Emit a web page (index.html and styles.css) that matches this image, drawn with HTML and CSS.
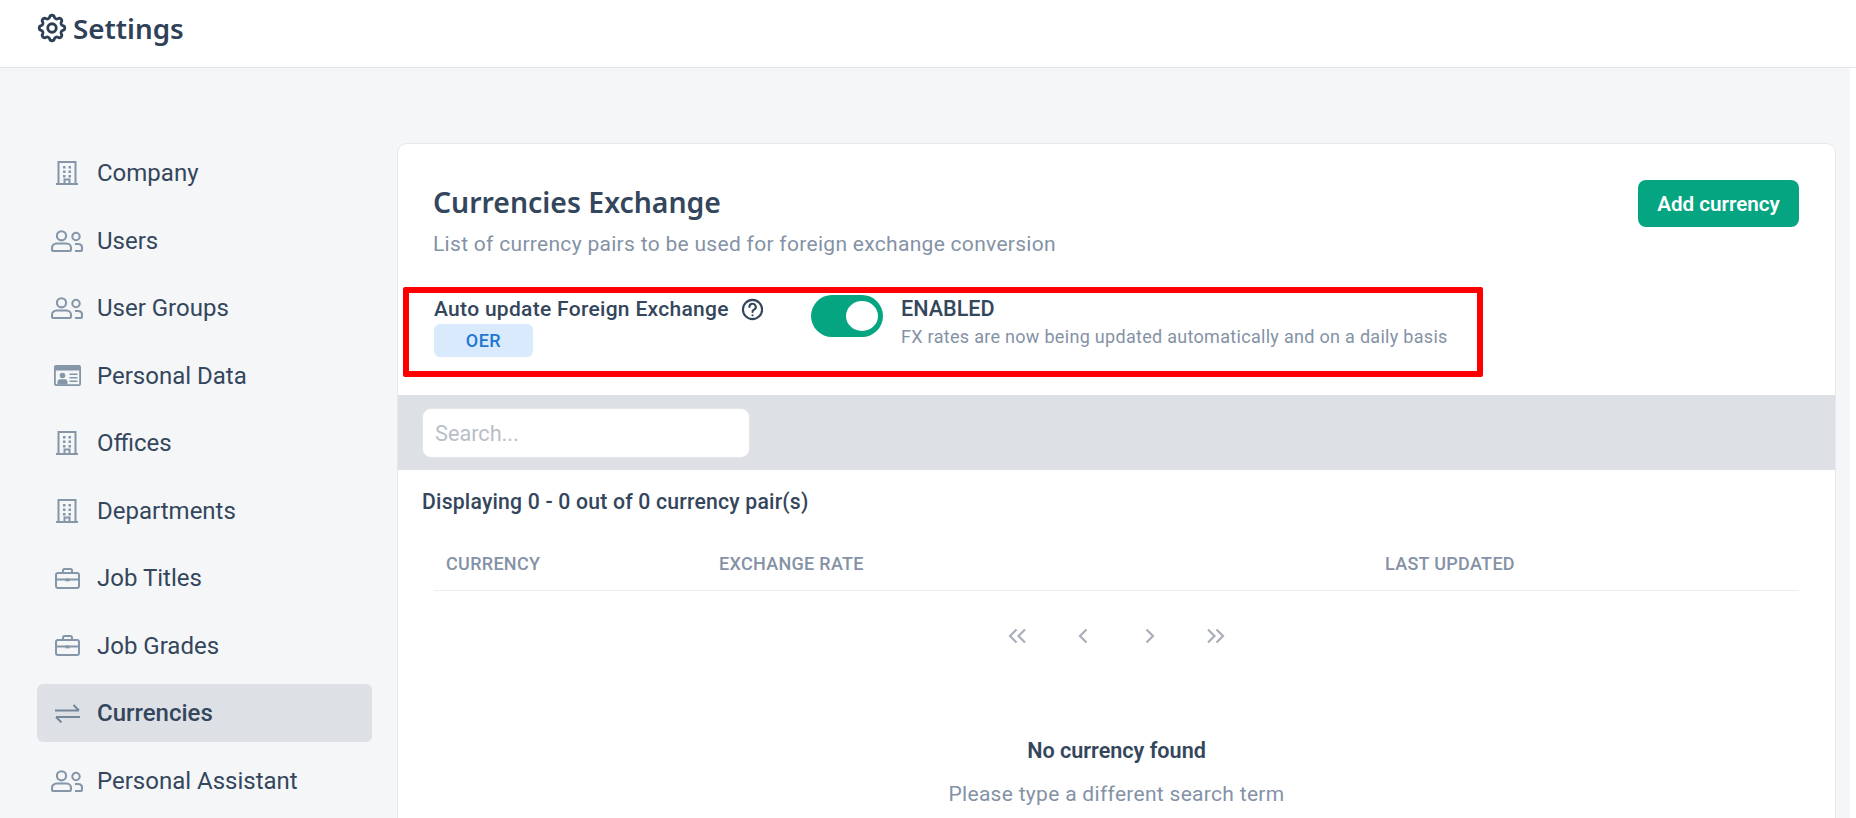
FILE: index.html
```html
<!DOCTYPE html>
<html lang="en">
<head>
<meta charset="utf-8">
<title>Settings</title>
<link rel="stylesheet" href="styles.css">
</head>
<body>
<svg class="sprites" aria-hidden="true">
  <symbol id="i-building" viewBox="0 0 22 24"><path d="M0 23h22M2.500 23V1h17v22M8.500 23v-4.500h5V23" fill="none" stroke="currentColor" stroke-width="2"/><path d="M7 5h2.500v2.500H7zM12.500 5H15v2.500h-2.500zM7 9.500h2.500V12H7zM12.500 9.500H15V12h-2.500zM7 14h2.500v2.500H7zM12.500 14H15v2.500h-2.500z" fill="currentColor"/></symbol>
  <symbol id="i-users" viewBox="0 0 32 22"><g fill="none" stroke="currentColor" stroke-width="2.100"><circle cx="10.500" cy="5.800" r="4.600"/><path d="M2.500 21c-.9 0-1.500-.6-1.500-1.400V18c0-2.700 2-4.500 4.500-4.500h10c2.500 0 4.500 1.800 4.500 4.500v1.600c0 .8-.6 1.400-1.500 1.400z"/><circle cx="25" cy="6.500" r="3.700"/><path d="M24 14h3c2.500 0 4 1.500 4 3.700v1.800c0 .9-.6 1.500-1.500 1.500H24"/></g></symbol>
  <symbol id="i-card" viewBox="0 0 27 21"><path fill-rule="evenodd" fill="currentColor" d="M2 0h23a2 2 0 0 1 2 2v17a2 2 0 0 1-2 2H2a2 2 0 0 1-2-2V2a2 2 0 0 1 2-2zM1.800 5.500v13.700c0 0 0 0 0 0h23.400V5.500z"/><circle cx="8.500" cy="10.500" r="2.800" fill="currentColor"/><path fill="currentColor" d="M3.500 19.500v-2.800c0-1.500 1-2.500 2.500-2.500h5c1.500 0 2.500 1 2.500 2.500v2.800zM15.500 8.500h8V10h-8zM15.500 12h8v1.500h-8zM15.500 15.500h8V17h-8z"/></symbol>
  <symbol id="i-case" viewBox="0 0 25 21"><g fill="none" stroke="currentColor" stroke-width="2"><rect x="1" y="5" width="23" height="15" rx="2"/><path d="M8 5V2.600C8 1.700 8.700 1 9.600 1h5.800c.9 0 1.600.7 1.600 1.600V5M1 11.500h23"/></g><rect x="10.300" y="10.500" width="4.400" height="2.800" fill="currentColor"/></symbol>
  <symbol id="i-swap" viewBox="0 0 25 19"><path d="M0 6.500h24M18.500 1l5.500 5.500M25 13H1M6.500 18.500L1 13" fill="none" stroke="currentColor" stroke-width="2"/></symbol>
</svg>

<header class="topbar">
  <svg class="gear" viewBox="0 0 24 24" fill="none" stroke="currentColor" stroke-width="2" stroke-linecap="round" stroke-linejoin="round"><path d="M10.325 4.317c.426-1.756 2.924-1.756 3.350 0a1.724 1.724 0 0 0 2.573 1.066c1.543-.94 3.310.826 2.370 2.370a1.724 1.724 0 0 0 1.065 2.572c1.756.426 1.756 2.924 0 3.350a1.724 1.724 0 0 0-1.066 2.573c.94 1.543-.826 3.310-2.370 2.370a1.724 1.724 0 0 0-2.572 1.065c-.426 1.756-2.924 1.756-3.350 0a1.724 1.724 0 0 0-2.573-1.066c-1.543.94-3.310-.826-2.370-2.370a1.724 1.724 0 0 0-1.065-2.572c-1.756-.426-1.756-2.924 0-3.350a1.724 1.724 0 0 0 1.066-2.573c-.94-1.543.826-3.310 2.370-2.370c1 .608 2.296.07 2.572-1.065z"/><circle cx="12" cy="12" r="3"/></svg>
  <h1 class="page-title">Settings</h1>
</header>

<div class="page">
  <nav class="side">
    <a class="side-item"><span class="side-icon"><svg class="ic-b"><use href="#i-building"/></svg></span>Company</a>
    <a class="side-item"><span class="side-icon"><svg class="ic-u"><use href="#i-users"/></svg></span>Users</a>
    <a class="side-item"><span class="side-icon"><svg class="ic-u"><use href="#i-users"/></svg></span>User Groups</a>
    <a class="side-item"><span class="side-icon"><svg class="ic-c"><use href="#i-card"/></svg></span>Personal Data</a>
    <a class="side-item"><span class="side-icon"><svg class="ic-b"><use href="#i-building"/></svg></span>Offices</a>
    <a class="side-item"><span class="side-icon"><svg class="ic-b"><use href="#i-building"/></svg></span>Departments</a>
    <a class="side-item"><span class="side-icon"><svg class="ic-j"><use href="#i-case"/></svg></span>Job Titles</a>
    <a class="side-item"><span class="side-icon"><svg class="ic-j"><use href="#i-case"/></svg></span>Job Grades</a>
    <a class="side-item active"><span class="side-icon"><svg class="ic-s"><use href="#i-swap"/></svg></span>Currencies</a>
    <a class="side-item"><span class="side-icon"><svg class="ic-u"><use href="#i-users"/></svg></span>Personal Assistant</a>
  </nav>

  <main class="card">
    <div class="card-head">
      <div>
        <h2 class="card-title">Currencies Exchange</h2>
        <p class="card-sub">List of currency pairs to be used for foreign exchange conversion</p>
      </div>
      <button class="btn-add">Add currency</button>
    </div>

    <section class="auto-box">
      <div class="auto-left">
        <div class="auto-label">Auto update Foreign Exchange
          <svg class="help" viewBox="0 0 24 24" fill="none" stroke="currentColor" stroke-width="2.200" stroke-linecap="round"><circle cx="12" cy="12" r="10"/><path d="M8.800 9.300a3.300 3.300 0 1 1 4.900 2.900c-1.100.6-1.700 1.200-1.700 2.300"/><path d="M12 18v.1"/></svg>
        </div>
        <span class="badge">OER</span>
      </div>
      <span class="toggle"><span class="knob"></span></span>
      <div class="auto-state">
        <div class="state-title">ENABLED</div>
        <div class="state-sub">FX rates are now being updated automatically and on a daily basis</div>
      </div>
    </section>

    <div class="search-bar"><input class="search" placeholder="Search..."></div>

    <div class="count">Displaying 0 - 0 out of 0 currency pair(s)</div>

    <div class="thead">
      <span class="col-a">CURRENCY</span>
      <span class="col-b">EXCHANGE RATE</span>
      <span>LAST UPDATED</span>
    </div>

    <div class="pager">
      <svg viewBox="0 0 20 16"><path d="M9.500 1.500L3 8l6.500 6.500M18 1.500L11.500 8l6.500 6.500"/></svg>
      <svg viewBox="0 0 20 16"><path d="M13.500 1.500L7 8l6.500 6.500"/></svg>
      <svg viewBox="0 0 20 16"><path d="M6.500 1.500L13 8l-6.500 6.500"/></svg>
      <svg viewBox="0 0 20 16"><path d="M2 1.500L8.500 8 2 14.500M10.500 1.500L17 8l-6.500 6.500"/></svg>
    </div>

    <div class="empty">
      <div class="empty-title">No currency found</div>
      <div class="empty-sub">Please type a different search term</div>
    </div>
  </main>
</div>
</body>
</html>
```
FILE: styles.css
```css
* { box-sizing: border-box; }
html, body { height: 100%; }
body {
  margin: 0;
  overflow: hidden;
  background: #fff;
  color: #34465c;
  font-family: Roboto, "Liberation Sans", sans-serif;
}
.sprites { display: none; }
.topbar {
  height: 68px;
  background: #fff;
  border-bottom: 1px solid #e1e4ea;
  display: flex;
  align-items: center;
  padding: 0 0 10px 35px;
  gap: 4px;
}
.gear { width: 34px; height: 34px; margin-bottom: 2px; color: #2d3f55; }
.page-title {
  margin: 0;
  font: 600 27.800px/1.2 "Noto Sans", sans-serif;
  color: #2f4157;
}
.page {
  display: flex;
  align-items: flex-start;
  height: calc(100vh - 68px);
  overflow: hidden;
  margin-right: 6px;
  padding: 75px 14px 0 37px;
  background: #f5f6f8;
}
.side { width: 335px; flex: none; padding-top: 1px; }
.side-item {
  height: 58px;
  margin-bottom: 9.500px;
  display: flex;
  align-items: center;
  font-size: 24px;
  border-radius: 6px;
}
.side-item.active { background: #dde0e5; font-weight: 500; }
.side-icon {
  width: 60px;
  flex: none;
  display: flex;
  justify-content: center;
  color: #8496a8;
}
.active .side-icon { color: #74869a; }
.ic-b { width: 22px; height: 24px; }
.ic-u { width: 32px; height: 22px; }
.ic-c { width: 27px; height: 21px; }
.ic-j { width: 25px; height: 21px; }
.ic-s { width: 25px; height: 19px; }

.card {
  flex: 1;
  margin-left: 25px;
  height: 900px;
  background: #fff;
  border: 1px solid #e6e8ec;
  border-radius: 10px;
  padding: 36px 0 0;
}
.card-head {
  display: flex;
  justify-content: space-between;
  align-items: flex-start;
  padding: 0 36px 0 35px;
}
.card-title {
  margin: 2px 0 0;
  font: 600 28.400px/40px "Noto Sans", sans-serif;
  color: #34465c;
}
.card-sub { margin: 8px 0 0; font-size: 21px; line-height: 28px; letter-spacing: .3px; color: #8492a6; }
.btn-add {
  width: 161px;
  height: 47px;
  border: 0;
  border-radius: 8px;
  background: #05a582;
  color: #fff;
  font: 600 20.600px Roboto, sans-serif;
}
.auto-box {
  width: 1080px;
  height: 90px;
  margin: 29px 0 0 5px;
  padding: 2px 0 0 25px;
  border: 6px solid #ff0000;
  border-radius: 2px;
  display: flex;
  align-items: flex-start;
}
.auto-left { width: 377px; flex: none; }
.auto-label { display: flex; align-items: center; font-size: 21px; font-weight: 500; line-height: 28px; letter-spacing: .3px; height: 28px; }
.help { width: 23px; height: 23px; margin-left: 12px; }
.badge {
  display: block;
  width: 99px;
  height: 33px;
  margin-top: 1px;
  border-radius: 6px;
  background: #d9eafd;
  color: #1f77d0;
  font-size: 18px;
  font-weight: 500;
  line-height: 33px;
  text-align: center;
  letter-spacing: .5px;
}
.toggle {
  width: 72px;
  height: 42px;
  flex: none;
  border-radius: 21px;
  background: #05a582;
  display: flex;
  justify-content: flex-end;
  align-items: center;
  padding-right: 5px;
}
.knob { width: 32px; height: 30px; border-radius: 50%; background: #fff; }
.auto-state { margin-left: 18px; }
.state-title { font-size: 21.600px; font-weight: 500; line-height: 28px; }
.state-sub { font-size: 18px; line-height: 28px; letter-spacing: .3px; color: #8492a6; }

.search-bar {
  margin-top: 18px;
  height: 75px;
  background: #dde0e5;
  padding: 13px 24px;
}
.search {
  display: block;
  width: 328px;
  height: 50px;
  border: 1px solid #e3e5e9;
  border-radius: 9px;
  background: #fff;
  padding: 0 12px;
  font: 21.700px Roboto, sans-serif;
}
.search::placeholder { color: #b9bec7; }
.count {
  padding: 18px 0 0 24px;
  font-size: 21.200px;
  font-weight: 500;
  line-height: 28px;
  letter-spacing: .2px;
}
.thead {
  display: flex;
  margin: 35px 36px 0 36px;
  padding: 0 0 0 12px;
  height: 40px;
  align-items: flex-start;
  border-bottom: 1px solid #eceef1;
  font-size: 18px;
  font-weight: 500;
  line-height: 26px;
  letter-spacing: .3px;
  color: #8492a6;
}
.col-a { width: 273px; }
.col-b { width: 666px; }
.pager {
  display: flex;
  justify-content: center;
  gap: 46.600px;
  margin-top: 37px;
}
.pager svg {
  width: 20px;
  height: 16px;
  fill: none;
  stroke: #a9aeb9;
  stroke-width: 2.200;
}
.empty { text-align: center; margin-top: 93px; }
.empty-title { font-size: 21.600px; font-weight: 600; line-height: 28px; }
.empty-sub { margin-top: 15px; font-size: 21px; line-height: 28px; letter-spacing: .3px; color: #8492a6; }
```
